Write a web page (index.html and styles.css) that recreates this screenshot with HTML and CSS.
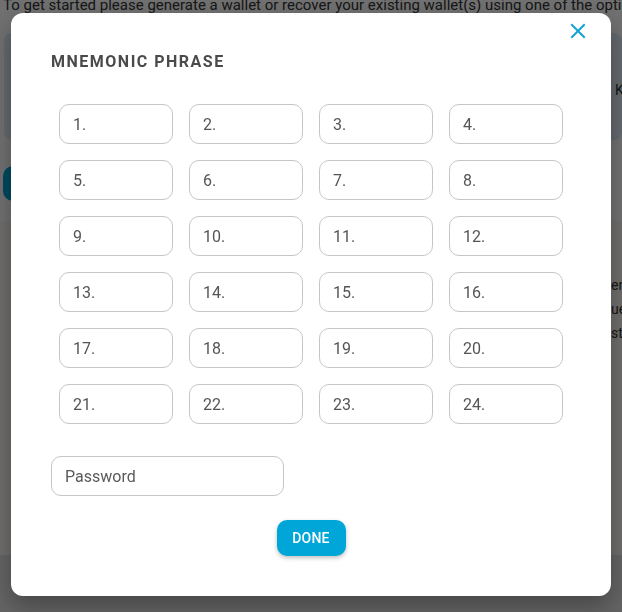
FILE: index.html
```html
<!DOCTYPE html>
<html lang="en">
<head>
<meta charset="utf-8">
<title>Mnemonic Phrase</title>
<link rel="stylesheet" href="styles.css">
</head>
<body>
<div class="page">
  <p class="intro">To get started please generate a wallet or recover your existing wallet(s) using one of the options</p>
  <div class="card">
    <div class="card-text">Keep</div>
  </div>
  <div class="btn-row"><span class="page-btn"></span></div>
  <div class="section">
    <p class="sec-line">entered</p>
    <p class="sec-line">ue</p>
    <p class="sec-line">st</p>
  </div>
  <div class="footer"></div>
</div>
<div class="overlay"></div>
<div class="modal">
  <button class="close" aria-label="Close">
    <svg width="16" height="16" viewBox="0 0 16 16"><path d="M2 2 L14 14 M14 2 L2 14" stroke="#12a2d5" stroke-width="2" fill="none" stroke-linecap="square"/></svg>
  </button>
  <h2 class="title">MNEMONIC PHRASE</h2>
  <div class="grid">
    <div class="word">1.</div><div class="word">2.</div><div class="word">3.</div><div class="word">4.</div>
    <div class="word">5.</div><div class="word">6.</div><div class="word">7.</div><div class="word">8.</div>
    <div class="word">9.</div><div class="word">10.</div><div class="word">11.</div><div class="word">12.</div>
    <div class="word">13.</div><div class="word">14.</div><div class="word">15.</div><div class="word">16.</div>
    <div class="word">17.</div><div class="word">18.</div><div class="word">19.</div><div class="word">20.</div>
    <div class="word">21.</div><div class="word">22.</div><div class="word">23.</div><div class="word">24.</div>
  </div>
  <div class="password">Password</div>
  <div class="actions"><button class="done">DONE</button></div>
</div>
</body>
</html>
```
FILE: styles.css
```css
html, body {
  margin: 0;
  padding: 0;
  width: 622px;
  height: 612px;
  overflow: hidden;
  font-family: Roboto, "Liberation Sans", sans-serif;
  background: #ffffff;
}
.page {
  width: 622px;
  height: 612px;
  display: flex;
  flex-direction: column;
  background: #ffffff;
}
.intro {
  margin: -3px 0 0 0;
  padding: 0 0 0 3px;
  font-size: 15px;
  line-height: 16px;
  height: 16px;
  color: #333;
  white-space: nowrap;
  overflow: hidden;
}
.card {
  margin: 20px 0 0 4px;
  height: 107px;
  background: #e2edf7;
  border-radius: 8px;
}
.card-text {
  padding: 49px 0 0 611px;
  font-size: 14px;
  line-height: 16px;
  color: #333;
  white-space: nowrap;
  overflow: hidden;
}
.btn-row {
  padding: 26px 0 0 3px;
  height: 35px;
}
.page-btn {
  display: block;
  width: 120px;
  height: 35px;
  border-radius: 10px;
  background: #00a5d6;
}
.section {
  margin-top: 20px;
  padding: 52px 0 0 611px;
  background: #fbf8f4;
  height: 282px;
  white-space: nowrap;
  overflow: hidden;
}
.sec-line {
  margin: 0;
  font-size: 14px;
  line-height: 24px;
  color: #333;
}
.footer {
  flex: 1;
  background: #e2e2e2;
}
.overlay {
  position: fixed;
  inset: 0;
  background: rgba(0, 0, 0, 0.56);
}
.modal {
  position: fixed;
  left: 11px;
  top: 13px;
  width: 600px;
  height: 583px;
  box-sizing: border-box;
  background: #ffffff;
  border-radius: 12px;
  box-shadow: 0 10px 24px rgba(0, 0, 0, 0.3);
  padding: 40px 40px 0 40px;
  display: flex;
  flex-direction: column;
}
.close {
  position: absolute;
  top: 6px;
  right: 21px;
  width: 24px;
  height: 24px;
  padding: 0;
  border: none;
  background: transparent;
  display: flex;
  align-items: center;
  justify-content: center;
}
.title {
  margin: 0;
  font-size: 16px;
  line-height: 18px;
  font-weight: 700;
  letter-spacing: 1.5px;
  color: #4a4a4a;
}
.grid {
  margin-top: 33px;
  padding: 0 8px;
  display: grid;
  grid-template-columns: repeat(4, 114px);
  column-gap: 16px;
  row-gap: 16px;
}
.word {
  height: 40px;
  box-sizing: border-box;
  border: 1px solid #c6c6c6;
  border-radius: 10px;
  padding-left: 13px;
  display: flex;
  align-items: center;
  font-size: 16px;
  color: #555;
}
.password {
  margin-top: 32px;
  width: 233px;
  height: 40px;
  box-sizing: border-box;
  border: 1px solid #c6c6c6;
  border-radius: 10px;
  padding-left: 13px;
  display: flex;
  align-items: center;
  font-size: 16px;
  color: #5a5a5a;
}
.actions {
  margin-top: 24px;
  display: flex;
  justify-content: center;
}
.done {
  width: 69px;
  height: 36px;
  border: none;
  border-radius: 10px;
  background: #00a6d7;
  color: #ffffff;
  font-family: Roboto, "Liberation Sans", sans-serif;
  font-size: 14px;
  font-weight: 500;
  letter-spacing: 0.2px;
  padding: 0;
  box-shadow: 0 2px 4px rgba(0, 0, 0, 0.25);
}
```
